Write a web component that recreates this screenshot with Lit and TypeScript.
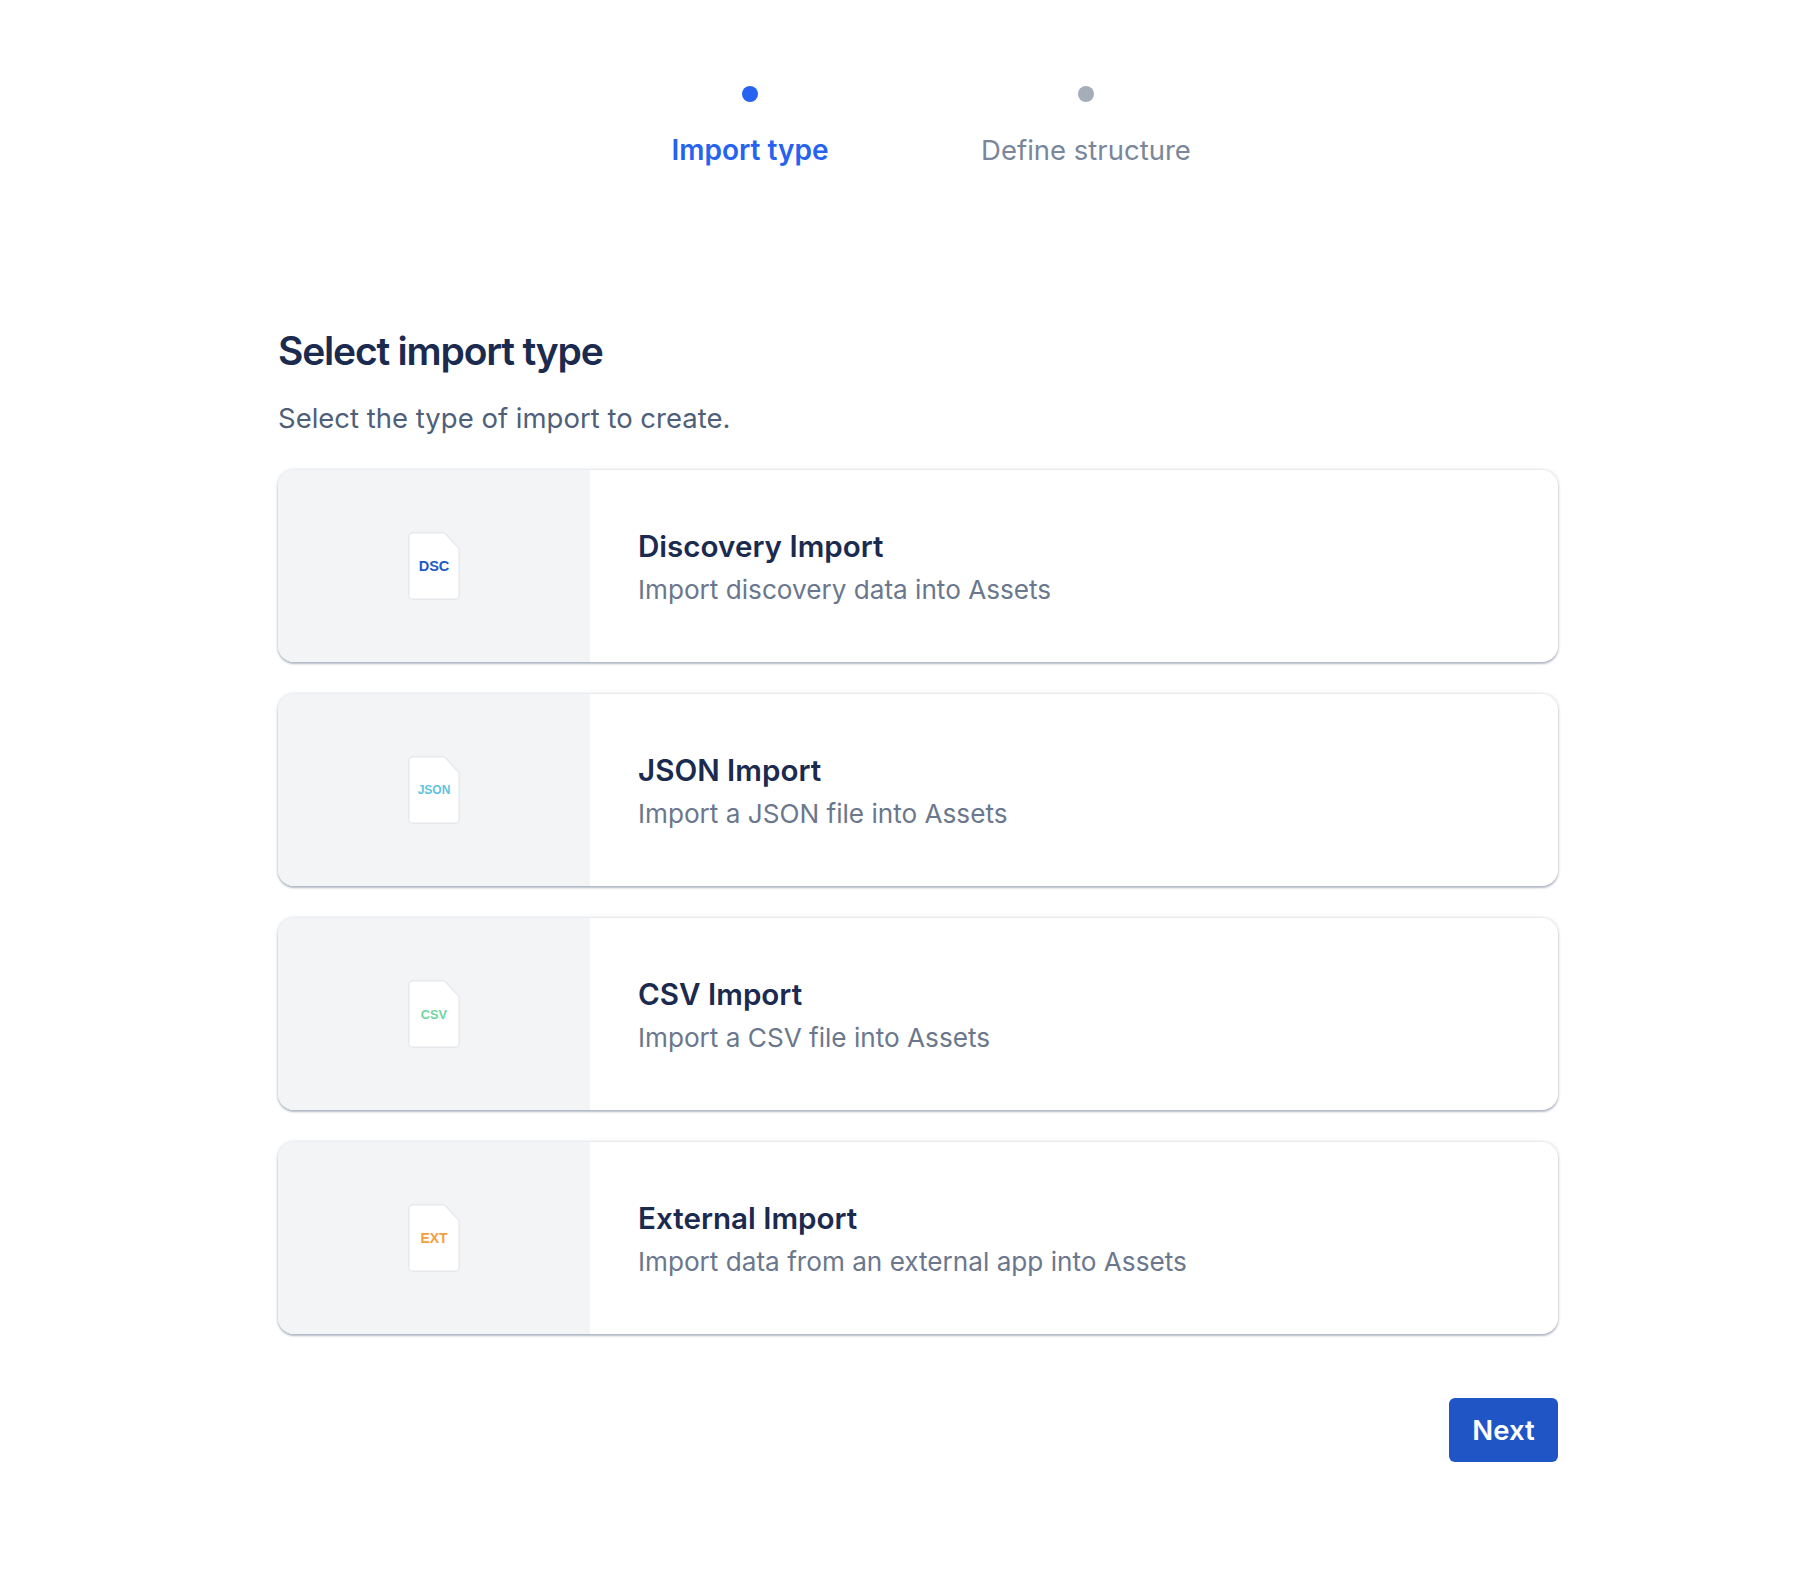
import { LitElement, html, css } from 'lit';
import { customElement } from 'lit/decorators.js';

const IMPORTS = [
  { code: 'DSC', color: '#2257c9', size: 14.5, title: 'Discovery Import', desc: 'Import discovery data into Assets' },
  { code: 'JSON', color: '#5bc4e4', size: 12, title: 'JSON Import', desc: 'Import a JSON file into Assets' },
  { code: 'CSV', color: '#70d6a0', size: 12.8, title: 'CSV Import', desc: 'Import a CSV file into Assets' },
  { code: 'EXT', color: '#f59d3d', size: 14, title: 'External Import', desc: 'Import data from an external app into Assets' },
];

@customElement('app-root')
export class AppRoot extends LitElement {
  static styles = css`
    :host {
      display: block;
      height: 1576px;
      background: #fff;
      font-family: Inter, "Liberation Sans", sans-serif;
      color: #172b4d;
    }
    .page {
      width: 1280px;
      margin-left: 278px;
      padding-top: 86px;
    }
    .steps {
      display: grid;
      grid-template-columns: 336px 336px;
      justify-content: center;
    }
    .step {
      display: flex;
      flex-direction: column;
      align-items: center;
      gap: 31px;
      font-size: 27.5px;
      line-height: 34px;
      color: #7a869a;
    }
    .step .dot {
      width: 16px;
      height: 16px;
      border-radius: 50%;
      background: #a5adba;
    }
    .step.active {
      color: #2563f0;
      font-size: 28px;
      font-weight: 600;
    }
    .step.active .dot {
      background: #2563f0;
    }
    h1 {
      margin: 161px 0 0;
      font-size: 39px;
      line-height: 46px;
      font-weight: 600;
      letter-spacing: -1.2px;
      color: #1b2b4f;
    }
    .sub {
      margin: 27px 0 0;
      font-size: 27.5px;
      line-height: 34px;
      color: #505f79;
    }
    .cards {
      display: flex;
      flex-direction: column;
      gap: 32px;
      margin-top: 35px;
    }
    .card {
      display: flex;
      height: 192px;
      box-sizing: border-box;
      border-radius: 16px;
      overflow: hidden;
      background: #fff;
      box-shadow: 0 0 3px 1px rgba(9, 30, 66, 0.12), 0 2px 2px rgba(9, 30, 66, 0.25);
    }
    .thumb {
      flex: 0 0 312px;
      display: flex;
      align-items: center;
      justify-content: center;
      background: #f3f4f6;
    }
    .file {
      position: relative;
      display: block;
      width: 52px;
      height: 68px;
    }
    .file svg {
      position: absolute;
      inset: 0;
    }
    .file span {
      position: absolute;
      inset: 0;
      display: flex;
      align-items: center;
      justify-content: center;
      font-family: "Liberation Sans", Arial, sans-serif;
      font-weight: 700;
    }
    .body {
      display: flex;
      flex-direction: column;
      justify-content: center;
      padding: 2px 0 0 48px;
    }
    .title {
      font-size: 29.6px;
      line-height: 38px;
      font-weight: 600;
      color: #1b2b4f;
    }
    .desc {
      margin-top: 8px;
      font-size: 26.15px;
      line-height: 34px;
      color: #6b778c;
    }
    .actions {
      display: flex;
      justify-content: flex-end;
      margin-top: 64px;
    }
    button {
      width: 109px;
      height: 64px;
      border: 0;
      border-radius: 6px;
      background: #2055c5;
      color: #fff;
      font: 600 27.5px Inter, "Liberation Sans", sans-serif;
    }
  `;

  render() {
    return html`
      <div class="page">
        <div class="steps">
          <div class="step active"><span class="dot"></span>Import type</div>
          <div class="step"><span class="dot"></span>Define structure</div>
        </div>
        <h1>Select import type</h1>
        <p class="sub">Select the type of import to create.</p>
        <div class="cards">
          ${IMPORTS.map(
            (item) => html`
              <div class="card">
                <div class="thumb">
                  <div class="file">
                    <svg width="52" height="68" viewBox="0 0 52 68">
                      <path
                        d="M4.750 .75H35.500a2 2 0 0 1 1.400.6L50.650 16.100a2 2 0 0 1 .6 1.400V63.250a4 4 0 0 1-4 4H4.750a4 4 0 0 1-4-4V4.750a4 4 0 0 1 4-4z"
                        fill="#fff"
                        stroke="#e8e9ed"
                        stroke-width="1.500"
                      />
                    </svg>
                    <span style="color:${item.color};font-size:${item.size}px">${item.code}</span>
                  </div>
                </div>
                <div class="body">
                  <div class="title">${item.title}</div>
                  <div class="desc">${item.desc}</div>
                </div>
              </div>
            `
          )}
        </div>
        <div class="actions"><button>Next</button></div>
      </div>
    `;
  }
}
